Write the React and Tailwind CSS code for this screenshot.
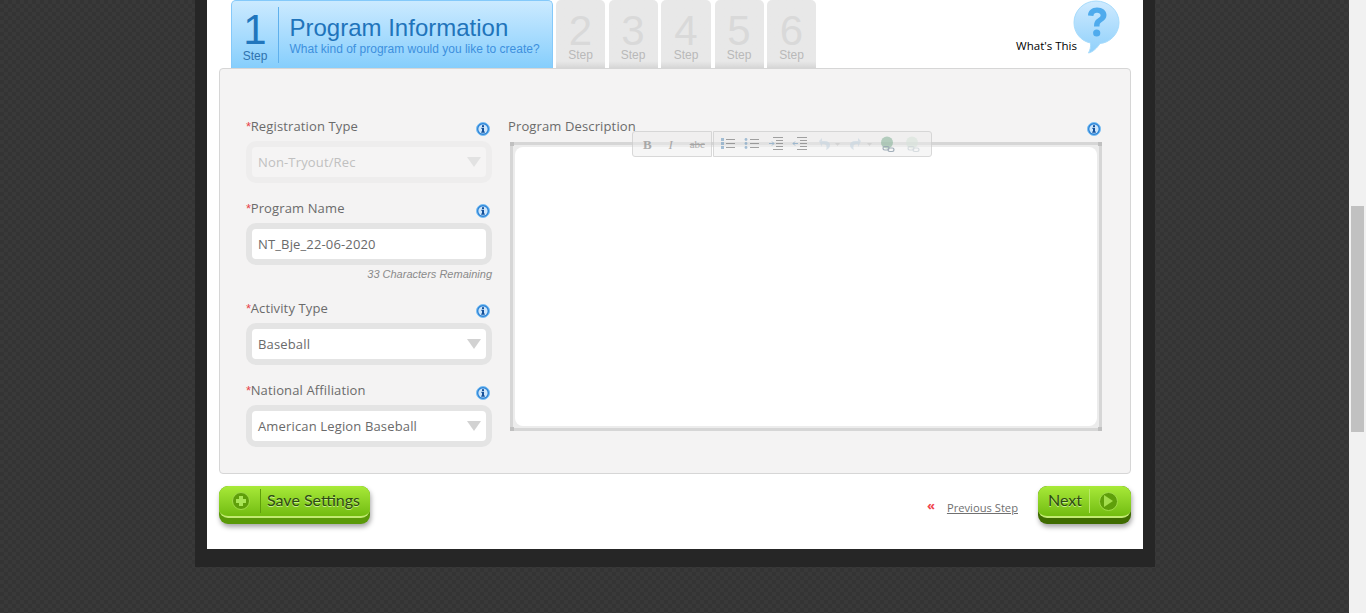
import React from "react";

const OS = "font-['Open_Sans','Noto_Sans',sans-serif]";
const AR = "font-['Liberation_Sans',Arial,sans-serif]";

function Info() {
  return (
    <svg width="14" height="14" viewBox="0 0 14 14" className="shrink-0">
      <circle cx="7" cy="7" r="6.5" fill="#2f86d8" stroke="#7cc0f4" strokeWidth="1" />
      <circle cx="7" cy="7" r="4.6" fill="#cfe6fa" />
      <rect x="6" y="3.2" width="2" height="1.8" fill="#14509a" />
      <path d="M5.4 5.8H8V9.6H8.8V10.8H5.2V9.6H6V7H5.4Z" fill="#14509a" />
    </svg>
  );
}

function Caret({ dim }) {
  return (
    <svg width="14" height="10" viewBox="0 0 14 10" className="shrink-0">
      <path d="M0 0H14L7 10Z" fill={dim ? "#e2e2e2" : "#d2d2d2"} />
    </svg>
  );
}

function Field({ label, value, select, disabled, note, mb = "mb-[14px]" }) {
  return (
    <div className={note ? "" : mb}>
      <div className="flex items-center justify-between h-[22px] mb-1">
        <span className={`${OS} text-[13px] tracking-[0.13px] text-[#6b6b6b] pt-[2px]`}>
          <span className={`${AR} text-[#e8424a] -mr-[0.5px]`}>*</span>
          {label}
        </span>
        <span className="mt-[5px] mr-[2px]">
          <Info />
        </span>
      </div>
      <div className={`h-[42px] rounded-[10px] border-[6px] ${disabled ? "border-[#eeeded] bg-[#f5f4f4]" : "border-[#e4e4e4] bg-white"} flex items-center justify-between pl-[6px] pr-[5px]`}>
        <span className={`${OS} text-[13px] tracking-[0.15px] pt-[2px] ${disabled ? "text-[#c0c0c0]" : "text-[#6a6a6a]"}`}>{value}</span>
        {select && <Caret dim={disabled} />}
      </div>
      {note && (
        <div className={`${AR} h-[18px] mb-[14px] flex items-center justify-end italic text-[11px] text-[#8a8a8a]`}>
          {note}
        </div>
      )}
    </div>
  );
}

function GreyTab({ n, w }) {
  return (
    <div className={`${w} h-[68px] rounded-t-[5px] bg-gradient-to-b from-[#e8e8e8] from-[90%] to-[#d6d6d6] flex flex-col items-center pt-[14px] ${AR}`}>
      <span className="text-[42px] leading-[34px] text-[#d9d9d9]">{n}</span>
      <span className="text-[12px] leading-[14px] text-[#b9b9b9]">Step</span>
    </div>
  );
}

function Bubble() {
  return (
    <svg width="47" height="54" viewBox="0 0 47 54">
      <defs>
        <linearGradient id="bub" x1="0" y1="0" x2="0" y2="1">
          <stop offset="0" stopColor="#cfeaff" />
          <stop offset="1" stopColor="#8fd0fb" />
        </linearGradient>
      </defs>
      <path d="M23 1C35.5 1 46 10.5 46 22.5S36 43 27 43.5C24 48 20 52 15.5 53C17 50 18 47 17.5 43C8 41 1 33 1 22.5 1 10.5 11 1 23 1Z" fill="url(#bub)" stroke="#a8dcfc" />
      <path d="M15 15.5C15 10.500 19 7.500 24 7.500C29.500 7.500 33.500 10.500 33.500 15C33.500 18.500 31.500 20.200 29 21.800C27 23 26.500 24 26.500 26.500H21C21 22.500 22 20.500 24.500 18.800C26.600 17.400 27.600 16.600 27.600 15.300C27.600 13.700 26 12.800 24 12.800C22 12.800 20.600 14 20.400 16Z" fill="#4fabed" />
      <circle cx="23.700" cy="33" r="3.600" fill="#4fabed" />
    </svg>
  );
}

function Toolbar() {
  const s = { stroke: "#8b8b8b", strokeWidth: 1 };
  const Lines = ({ x }) => (
    <g {...s}>
      <path d={`M${x} 3.500H${x + 9}M${x} 7.500H${x + 9}M${x} 11.500H${x + 9}`} />
    </g>
  );
  const Chain = ({ x, c }) => (
    <g fill="none" stroke={c} strokeWidth="1.200">
      <rect x={x - 5} y="10.500" width="6" height="3.500" rx="1.700" />
      <rect x={x} y="12" width="6" height="3.500" rx="1.700" />
    </g>
  );
  return (
    <div className="absolute left-[119px] -top-[14px] flex h-[26px] opacity-80">
      <div className="w-[80px] h-[26px] rounded-l-[3px] border border-[#cfcfcf] bg-[#ececec]/60 flex items-center pl-[10px] gap-[13px] text-[#9a9a9a]">
        <span className="font-['Liberation_Serif',serif] font-bold text-[13px] leading-none">B</span>
        <span className="font-['Liberation_Serif',serif] italic text-[13px] leading-none w-[12px] text-center">I</span>
        <span className="font-['Liberation_Serif',serif] text-[11px] leading-none line-through">abc</span>
      </div>
      <div className="ml-[1px] w-[219px] h-[26px] rounded-r-[3px] border border-[#cfcfcf] bg-[#ececec]/60 flex items-center pl-[6px]">
        <svg width="208" height="17" viewBox="0 0 208 17">
          <g fill="#8fb0cc"><rect x="1" y="2" width="3" height="3" /><rect x="1" y="6" width="3" height="3" /><rect x="1" y="10" width="3" height="3" /></g>
          <Lines x={6} />
          <g fill="#8fb0cc"><circle cx="26" cy="3.500" r="1.400" /><circle cx="26" cy="7.500" r="1.400" /><circle cx="26" cy="11.500" r="1.400" /></g>
          <Lines x={30} />
          <g stroke="#8b8b8b"><path d="M53 1.500H63M56 4.500H63M56 7.500H63M56 10.500H63M53 13.500H63" /></g>
          <path d="M49 7.500H54M52 5.500L54 7.500L52 9.500" stroke="#8fb0cc" fill="none" />
          <g stroke="#8b8b8b"><path d="M77 1.500H87M80 4.500H87M80 7.500H87M80 10.500H87M77 13.500H87" /></g>
          <path d="M78 7.500H73M75 5.500L73 7.500L75 9.500" stroke="#8fb0cc" fill="none" />
          <path d="M99 5L102 2V5H105C108 5 110 7 110 9C110 12 108 13 106 14C107 12 107 8 104 8H102V11Z" fill="#d0dbe4" />
          <path d="M115 7H120L117.500 10Z" fill="#d2d2d2" />
          <path d="M141 5L138 2V5H135C132 5 130 7 130 9C130 12 132 13 134 14C133 12 133 8 136 8H138V11Z" fill="#d0dbe4" />
          <path d="M147 7H152L149.500 10Z" fill="#d2d2d2" />
          <circle cx="167" cy="6.500" r="6" fill="#a3c3b0" />
          <Chain x={168} c="#8a9aa8" />
          <circle cx="192" cy="6.500" r="6" fill="#dde6df" />
          <Chain x={193} c="#cdd4d8" />
        </svg>
      </div>
    </div>
  );
}

function Corner({ className }) {
  return <span className={`absolute w-[4px] h-[4px] bg-[#c0c0c0] ${className}`} />;
}

function GreenBtn({ children, dark, className }) {
  return (
    <div className={`h-[38px] rounded-[9px] ${dark ? "bg-[#3f6c00]" : "bg-[#5a9a08]"} shadow-[1px_3px_5px_rgba(0,0,0,0.35)] ${className}`}>
      <div className="h-[32px] rounded-[9px] border-b-2 border-[#c2ea72] bg-gradient-to-b from-[#a8ea38] to-[#72bc0e] flex items-center">
        {children}
      </div>
    </div>
  );
}

const btnText = "font-['Lato',sans-serif] text-[16px] text-[#2d4a12] [text-shadow:0_1px_0_rgba(230,255,190,0.7)]";

export default function App() {
  return (
    <div className="flex h-[613px] overflow-hidden bg-[#363636] bg-[repeating-conic-gradient(#393939_0_25%,#343434_0_50%)] bg-[size:8px_8px]">
      <div className="flex-1 pl-[195px]">
        <div className="w-[960px] h-[567px] bg-[#262626] px-3">
          <div className="h-[549px] bg-white px-3">
            {/* Tabs */}
            <div className="flex h-[68px]">
              <div className="ml-3 flex gap-[3.5px]">
                <div className={`w-[322px] h-[68px] -mr-[0.5px] rounded-t-[5px] border border-b-0 border-[#84c9fa] bg-gradient-to-b from-[#cbeaff] to-[#85cefc] flex ${AR}`}>
                  <div className="w-[46px] flex flex-col items-center pt-[12px]">
                    <span className="text-[42px] leading-[34px] text-[#2176bd]">1</span>
                    <span className="text-[12px] leading-[14px] mt-[2px] text-[#2f72ae]">Step</span>
                  </div>
                  <div className="w-px h-[56px] mt-[6px] bg-[#5fb0ec]" />
                  <div className="pl-[11px] pt-[12px]">
                    <div className="text-[24px] leading-[30px] -ml-[0.5px] text-[#1f74bb]">Program Information</div>
                    <div className="text-[12px] leading-[14px] -mt-[1px] -ml-[0.5px] text-[#3d90de]">What kind of program would you like to create?</div>
                  </div>
                </div>
                <GreyTab n="2" w="w-[49px]" />
                <GreyTab n="3" w="w-[49px]" />
                <GreyTab n="4" w="w-[50px]" />
                <GreyTab n="5" w="w-[49px]" />
                <GreyTab n="6" w="w-[49px]" />
              </div>
              <div className="ml-auto mr-[11px] flex items-start">
                <span className={`${OS} text-[11.5px] leading-[16px] text-black mt-[38px] -mr-[4px]`}>What's This</span>
                <Bubble />
              </div>
            </div>

            {/* Panel */}
            <div className="h-[406px] rounded-[4px] border border-[#d6d6d6] bg-[#f4f3f3] pt-[46px] pl-[26px] pr-[28px] flex">
              <div className="w-[246px] shrink-0">
                <Field label="Registration Type" value="Non-Tryout/Rec" select disabled />
                <Field label="Program Name" value="NT_Bje_22-06-2020" note="33 Characters Remaining" />
                <Field label="Activity Type" value="Baseball" select />
                <Field label="National Affiliation" value="American Legion Baseball" select />
              </div>
              <div className="ml-4 flex-1">
                <div className="flex items-center justify-between h-[22px] pr-[1px]">
                  <span className={`${OS} text-[13px] tracking-[0.13px] text-[#6b6b6b] pt-[2px]`}>Program Description</span>
                  <span className="mt-[5px]"><Info /></span>
                </div>
                <div className="relative ml-[2px] mt-[5px] h-[289px] border-[3px] border-[#d6d6d6] bg-[#ececec] p-[2px]">
                  <div className="h-full rounded-[8px] bg-white" />
                  <Corner className="-top-[3px] -left-[3px]" />
                  <Corner className="-top-[3px] -right-[3px]" />
                  <Corner className="-bottom-[3px] -left-[3px]" />
                  <Corner className="-bottom-[3px] -right-[3px]" />
                  <Toolbar />
                </div>
              </div>
            </div>

            {/* Footer */}
            <div className="flex items-start mt-3">
              <GreenBtn className="w-[151px]">
                <span className="ml-[13px] w-[18px] h-[18px] rounded-full bg-[#5f9f0a] border border-[#a2dc4a] flex items-center justify-center shrink-0">
                  <svg width="12" height="12" viewBox="0 0 12 12"><path d="M4 1H8V4H11V8H8V11H4V8H1V4H4Z" fill="#a9e556" /></svg>
                </span>
                <span className="ml-[10px] w-px h-[24px] bg-[#5f9f0a]" />
                <span className={`ml-[6px] -mt-[2px] ${btnText}`}>Save Settings</span>
              </GreenBtn>
              <div className={`ml-auto flex items-center mt-[14px] ${OS}`}>
                <span className="text-[#f0444c] font-bold text-[13px] leading-none -mt-[5px]">«</span>
                <span className="ml-[12px] text-[11.2px] leading-[16px] text-[#707070] underline">Previous Step</span>
              </div>
              <GreenBtn dark className="w-[93px] ml-[20px]">
                <span className={`ml-[10px] -mt-[2px] ${btnText}`}>Next</span>
                <span className="ml-[7px] w-px h-[24px] bg-[#b9e86a]" />
                <span className="ml-[9px] w-[19px] h-[19px] rounded-full bg-[#5f9f0a] border border-[#a2dc4a] flex items-center justify-center shrink-0">
                  <svg width="11" height="12" viewBox="0 0 11 12"><path d="M1 0L10 6L1 12Z" fill="#a3de4c" /></svg>
                </span>
              </GreenBtn>
            </div>
          </div>
        </div>
      </div>
      {/* Scrollbar */}
      <div className="w-[17px] h-full bg-[#f1f1f1] pt-[206px] pl-[2px] pr-[2px] shrink-0">
        <div className="h-[226px] bg-[#c1c1c1]" />
      </div>
    </div>
  );
}
